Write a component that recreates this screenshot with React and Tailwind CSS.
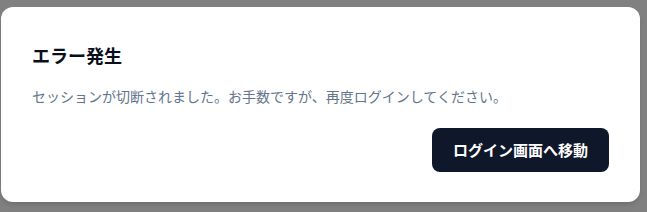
export default function App() {
  return (
    <div
      className="w-[647px] h-[212px] bg-[#808080] pt-[7px] pl-[1px] overflow-hidden"
      style={{ fontFamily: '"Noto Sans CJK JP", "Noto Sans", sans-serif' }}
    >
      <div className="w-[639px] h-[195px] bg-white rounded-[12px] shadow-md pt-[34px] pb-[30px] px-[31px] flex flex-col">
        <h2 className="text-lg leading-7 font-bold text-[#0b0f19]">エラー発生</h2>
        <p className="mt-[17px] text-sm leading-5 text-[#64748b]">
          セッションが切断されました。お手数ですが、再度ログインしてください。
        </p>
        <div className="mt-[22px] flex justify-end">
          <button className="h-[44px] w-[177px] rounded-lg bg-[#0f172a] text-white text-[15px] font-bold">
            ログイン画面へ移動
          </button>
        </div>
      </div>
    </div>
  );
}
